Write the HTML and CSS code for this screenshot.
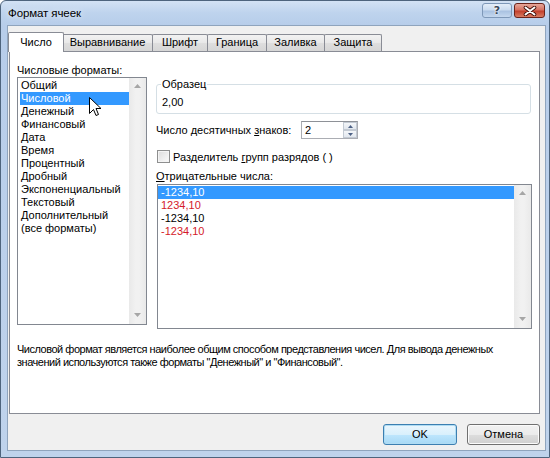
FILE: index.html
```html
<!DOCTYPE html>
<html lang="ru">
<head>
<meta charset="utf-8">
<title>Формат ячеек</title>
<link rel="stylesheet" href="styles.css">
</head>
<body>
<div class="window">
  <div class="titlebar">
    <span class="title">Формат ячеек</span>
    <div class="caption-btns">
      <div class="cbtn help">?</div>
      <div class="cbtn close">
        <svg width="14" height="10" viewBox="0 0 14 10"><path d="M2.5 1.5 L11.5 8.5 M11.5 1.5 L2.5 8.5" stroke="#3a0c06" stroke-width="3.6" stroke-linecap="round"/><path d="M2.5 1.5 L11.5 8.5 M11.5 1.5 L2.5 8.5" stroke="#fff" stroke-width="2" stroke-linecap="round"/></svg>
      </div>
    </div>
  </div>
  <div class="client">
    <div class="tabs">
      <div class="tab active t1">Число</div>
      <div class="tab t2">Выравнивание</div>
      <div class="tab t3">Шрифт</div>
      <div class="tab t4">Граница</div>
      <div class="tab t5">Заливка</div>
      <div class="tab t6">Защита</div>
    </div>
    <div class="panel">
      <div class="cols">
        <div class="leftcol">
          <div class="label">Числовые форматы:</div>
          <div class="listbox fmt">
            <ul class="items">
              <li>Общий</li>
              <li class="sel">Числовой</li>
              <li>Денежный</li>
              <li>Финансовый</li>
              <li>Дата</li>
              <li>Время</li>
              <li>Процентный</li>
              <li>Дробный</li>
              <li>Экспоненциальный</li>
              <li>Текстовый</li>
              <li>Дополнительный</li>
              <li>(все форматы)</li>
            </ul>
            <div class="vscroll">
              <svg class="arr" width="7" height="4" viewBox="0 0 7 4"><path d="M0 4 L3.5 0 L7 4 Z" fill="#a6a6a6"/></svg>
              <svg class="arr" width="7" height="4" viewBox="0 0 7 4"><path d="M0 0 L3.5 4 L7 0 Z" fill="#a6a6a6"/></svg>
            </div>
          </div>
        </div>
        <div class="rightcol">
          <fieldset class="sample">
            <legend>Образец</legend>
            <div class="sample-val">2,00</div>
          </fieldset>
          <div class="decrow">
            <span class="declabel">Число десятичных <u>з</u>наков:</span>
            <div class="spin">
              <span class="spin-val">2</span>
              <div class="spin-btns">
                <div class="sbtn"><svg width="5" height="3" viewBox="0 0 5 3"><path d="M0 3 L2.5 0 L5 3 Z" fill="#4d6185"/></svg></div>
                <div class="sbtn"><svg width="5" height="3" viewBox="0 0 5 3"><path d="M0 0 L2.5 3 L5 0 Z" fill="#4d6185"/></svg></div>
              </div>
            </div>
          </div>
          <div class="chkrow">
            <span class="chk"></span>
            <span>Разделитель <u>г</u>рупп разрядов ( )</span>
          </div>
          <div class="label neglabel"><u>О</u>трицательные числа:</div>
          <div class="listbox neg">
            <ul class="items">
              <li class="sel">-1234,10</li>
              <li class="red">1234,10</li>
              <li>-1234,10</li>
              <li class="red">-1234,10</li>
            </ul>
            <div class="vscroll">
              <svg class="arr" width="7" height="4" viewBox="0 0 7 4"><path d="M0 4 L3.5 0 L7 4 Z" fill="#a6a6a6"/></svg>
              <svg class="arr" width="7" height="4" viewBox="0 0 7 4"><path d="M0 0 L3.5 4 L7 0 Z" fill="#a6a6a6"/></svg>
            </div>
          </div>
        </div>
      </div>
      <p class="desc">Числовой формат является наиболее общим способом представления чисел. Для вывода денежных<br>значений используются также форматы "Денежный" и "Финансовый".</p>
    </div>
    <div class="buttons">
      <div class="btn default">OK</div>
      <div class="btn">Отмена</div>
    </div>
  </div>
  <svg class="cursor" width="13" height="21" viewBox="0 0 13 21"><path d="M0.5 0.5 L0.5 16.5 L4.5 12.5 L7 18.5 L9.5 17.5 L7 11.5 L12 11.5 Z" fill="#fff" stroke="#000" stroke-width="1" stroke-linejoin="miter"/></svg>
</div>
</body>
</html>
```

FILE: styles.css
```css
* { box-sizing: border-box; }
html, body { margin: 0; padding: 0; }
body {
  width: 550px;
  height: 458px;
  overflow: hidden;
  font-family: "Liberation Sans", Arial, sans-serif;
  font-size: 11px;
  color: #000;
  background: #fff;
}
ul { list-style: none; margin: 0; padding: 0; }
p { margin: 0; }

.window {
  position: relative;
  width: 550px;
  height: 458px;
  border: 1px solid #4e647d;
  border-radius: 6px 6px 0 0;
  background: linear-gradient(#d3e2f4 0, #bed3ed 12px, #b7cdea 24px, #bfd3ec 100%);
  padding: 0 3px 6px 6px;
  display: flex;
  flex-direction: column;
}

.titlebar {
  height: 24px;
  margin: 0 -3px 0 -6px;
  display: flex;
  justify-content: space-between;
  align-items: flex-start;
  padding: 0 4px 0 7px;
}
.title {
  line-height: 24px;
  font-size: 11.5px;
  letter-spacing: -0.1px;
  color: #000;
  text-shadow: 0 0 6px rgba(255,255,255,0.9);
}
.caption-btns {
  display: flex;
  gap: 2px;
  margin-top: 2px;
}
.cbtn {
  height: 15px;
  border-radius: 3px;
  display: flex;
  align-items: center;
  justify-content: center;
}
.help {
  width: 30px;
  border: 1px solid #7e98b8;
  background: linear-gradient(#e3edf8 0, #cbdcf0 45%, #a9c2e1 55%, #c5d8ef 100%);
  color: #39475a;
  font-family: "DejaVu Sans", sans-serif;
  font-size: 11px;
  font-weight: bold;
  line-height: 13px;
  text-shadow: 0 0 2px #fff, 0 0 2px #fff;
}
.close {
  width: 31px;
  border: 1px solid #6b231a;
  background: linear-gradient(#e7a799 0, #d67262 45%, #c2402c 55%, #d87c62 100%);
}

.client {
  flex: 1;
  background: #f0f0f0;
  border: 1px solid #8fa4bd;
  display: flex;
  flex-direction: column;
}

.tabs {
  display: flex;
  align-items: flex-end;
  height: 19px;
  margin-top: 6px;
  padding-left: 0;
}
.tab {
  height: 17px;
  border: 1px solid #898c95;
  border-bottom: none;
  background: linear-gradient(#f2f2f2, #e8e8e8 50%, #dedede 51%, #d6d6d6);
  line-height: 15px;
  text-align: center;
  margin-left: -1px;
  border-radius: 2px 2px 0 0;
}
.tab.active {
  height: 20px;
  margin-bottom: -1px;
  margin-left: 0;
  background: #fff;
  position: relative;
  z-index: 2;
  line-height: 18px;
}
.t1 { width: 56px; }
.t2 { width: 91px; margin-left: -2px; }
.t3 { width: 56px; }
.t4 { width: 60px; }
.t5 { width: 59px; }
.t6 { width: 58px; }

.panel {
  position: relative;
  z-index: 1;
  margin-left: 1px;
  width: 531px;
  height: 363px;
  border: 1px solid #898c95;
  background: #fff;
  padding: 0 7px;
}

.cols {
  display: flex;
  gap: 9px;
}
.leftcol { width: 130px; }
.rightcol { width: 376px; }

.label {
  line-height: 14px;
  height: 14px;
  white-space: nowrap;
}
.leftcol .label { margin-top: 11px; }

.listbox {
  display: flex;
  border: 1px solid #828790;
  background: #fff;
}
.listbox .items {
  flex: 1;
  padding: 1px 0 0 2px;
}
.listbox li {
  height: 13px;
  line-height: 13px;
  padding-left: 1px;
  white-space: nowrap;
}
.listbox li.sel {
  background: #3399ff;
  color: #fff;
}
.listbox li.red { color: #d41a2a; }

.fmt { height: 248px; }
.neg {
  height: 145px;
  margin-top: 1px;
  width: 375px;
  margin-left: 1px;
}
.neg .items { padding: 1px 0 0 0; }
.neg li { padding-left: 3px; }

.vscroll {
  width: 17px;
  background: linear-gradient(to right, #e9e9e9, #f1f1f1 40%, #f1f1f1 60%, #e9e9e9);
  display: flex;
  flex-direction: column;
  justify-content: space-between;
  align-items: center;
  padding: 6px 0 7px;
}

.sample {
  margin: 25px 0 0 0;
  width: 375px;
  border: 1px solid #d5dfe5;
  border-radius: 3px;
  padding: 0 5px 4px 5px;
}
.sample legend {
  padding: 0 1px;
  margin-left: -1px;
  line-height: 14px;
}
.sample-val {
  margin-top: 4px;
  line-height: 14px;
}

.decrow {
  margin-top: 7px;
  display: flex;
  align-items: center;
  height: 18px;
}
.declabel {
  width: 145px;
  white-space: nowrap;
}
.spin {
  width: 57px;
  height: 18px;
  border: 1px solid #abadb3;
  border-top-color: #8e9197;
  display: flex;
  background: #fff;
}
.spin-val {
  flex: 1;
  padding-left: 3px;
  line-height: 16px;
}
.spin-btns {
  width: 14px;
  display: flex;
  flex-direction: column;
}
.sbtn {
  flex: 1;
  border: 1px solid #c3cad3;
  background: linear-gradient(#f4f6f9, #e2e7ee);
  display: flex;
  align-items: center;
  justify-content: center;
}

.chkrow {
  margin-top: 11px;
  height: 13px;
  display: flex;
  align-items: center;
  gap: 3px;
  white-space: nowrap;
  padding-left: 1px;
}
.chk {
  width: 13px;
  height: 13px;
  border: 1px solid #8e8f8f;
  background: linear-gradient(135deg, #dcdcdc, #fbfbfb);
  box-shadow: inset 0 0 0 1px #f4f4f4;
}

.neglabel { margin-top: 6px; }

.desc {
  margin-top: 14px;
  line-height: 13px;
  white-space: nowrap;
  letter-spacing: -0.48px;
}

.buttons {
  margin-top: 10px;
  display: flex;
  justify-content: flex-end;
  gap: 10px;
  padding-right: 5px;
}
.btn {
  width: 74px;
  height: 21px;
  border: 1px solid #707070;
  border-radius: 3px;
  background: linear-gradient(#f2f2f2, #ebebeb 50%, #dddddd 51%, #cfcfcf);
  box-shadow: inset 0 0 0 1px #fbfbfb;
  text-align: center;
  line-height: 19px;
}
.btn.default {
  border-color: #3c7fb1;
  box-shadow: inset 0 0 0 1px #b0dcf3;
  background: linear-gradient(#eaf6fd, #d9f0fc 50%, #bee6fd 51%, #a7d9f5);
}
.btn + .btn { width: 73px; }

.cursor {
  position: absolute;
  left: 88px;
  top: 96px;
  z-index: 5;
}
```
